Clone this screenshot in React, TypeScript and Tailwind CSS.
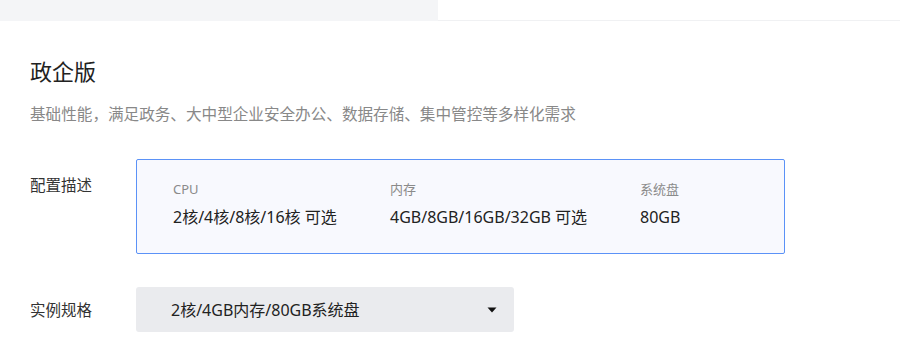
import React from "react";

const font = { fontFamily: '"Noto Sans", "Noto Sans CJK SC", sans-serif' };

export default function App() {
  return (
    <div className="w-[900px] h-[356px] bg-white overflow-hidden" style={font}>
      <div className="flex">
        <div className="w-[438px] h-[21px] bg-[#f4f5f7]" />
        <div className="flex-1 h-[21px] border-b border-[#f0f1f3]" />
      </div>
      <div className="px-[30px]">
        <h1 className="mt-[35px] text-[22px] leading-[30px] text-[#222]">政企版</h1>
        <p className="mt-[17px] text-[15.6px] leading-[22px] text-[#888]">
          基础性能，满足政务、大中型企业安全办公、数据存储、集中管控等多样化需求
        </p>
        <div className="mt-[34px] flex">
          <div className="w-[106px] pt-[15px] text-[15.5px] leading-[22px] text-[#333]">配置描述</div>
          <div className="w-[649px] h-[95px] rounded-[2px] border border-[#5b92f7] bg-[#f8f9fe] pl-[36px] pt-[20px] flex">
            <div className="w-[217px]">
              <div className="text-[13px] leading-[18px] text-[#8a8a8a]">CPU</div>
              <div className="mt-[8px] text-[16px] leading-[22px] text-[#222]">2核/4核/8核/16核 可选</div>
            </div>
            <div className="w-[250px]">
              <div className="text-[13px] leading-[18px] text-[#8a8a8a]">内存</div>
              <div className="mt-[8px] text-[16px] leading-[22px] text-[#222]">4GB/8GB/16GB/32GB 可选</div>
            </div>
            <div>
              <div className="text-[13px] leading-[18px] text-[#8a8a8a]">系统盘</div>
              <div className="mt-[8px] text-[16px] leading-[22px] text-[#222]">80GB</div>
            </div>
          </div>
        </div>
        <div className="mt-[33px] flex items-center">
          <div className="w-[106px] text-[15.5px] leading-[22px] text-[#333]">实例规格</div>
          <div className="w-[378px] h-[45px] rounded-[3px] bg-[#eaebee] flex items-center justify-between pl-[35px] pr-[17px]">
            <span className="text-[16px] leading-[22px] text-[#222]">2核/4GB内存/80GB系统盘</span>
            <svg width="10" height="6" viewBox="0 0 10 6">
              <path d="M0.5 0.5 L9.5 0.5 L5 5.5 Z" fill="#111" />
            </svg>
          </div>
        </div>
      </div>
    </div>
  );
}
